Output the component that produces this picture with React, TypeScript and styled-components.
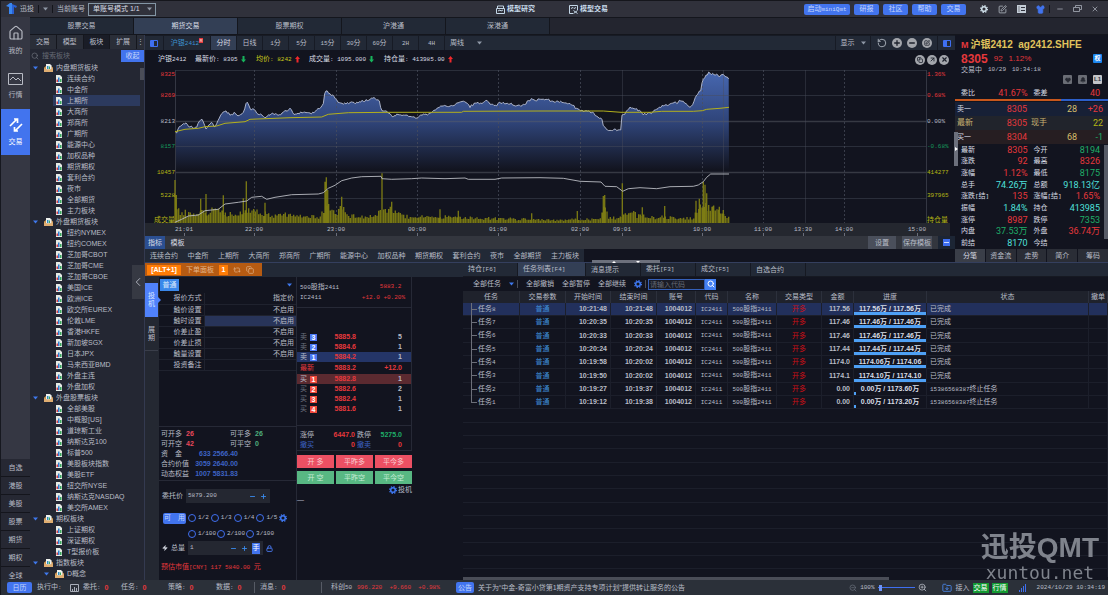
import React from "react";
import styled, { createGlobalStyle, css } from "styled-components";
import {
  Bell, ChevronLeft, Copy, FolderDown, Heart, House, Lock, Minus, Repeat2, Search,
  Shirt, SquarePen, X, Zap, ZoomIn, ZoomOut, RotateCcw, Plus, ArrowUpRight,
} from "lucide-react";

const c = {
  text: "#b9bdc7",
  bright: "#d9dde5",
  dim: "#6d727e",
  bg: "#12141f",
  tab: "#222936",
  tabOn: "#333f55",
  line: "#262936",
  blue: "#4274ee",
  red: "#e5383c",
  green: "#1fae68",
  yellow: "#b5b414",
  cyan: "#4fe0dc",
};

const sans = `"Liberation Sans", "Noto Sans CJK SC", sans-serif`;
const mono = `"Liberation Mono", "Noto Sans CJK SC", monospace`;

const Global = createGlobalStyle`
  *, *::before, *::after { box-sizing: border-box; }
  html, body { margin: 0; background: ${c.bg}; }
  body { font: 7px/10px ${sans}; color: ${c.text}; overflow: hidden; }
  button, input, select { font: inherit; color: inherit; margin: 0; padding: 0; border: 0; background: none; outline: 0; }
  button { white-space: nowrap; cursor: pointer; }
  svg { display: block; flex: none; }
`;

const Mono = styled.span<{ $c?: string }>`
  font: 6px/10px ${mono};
  color: ${(p) => p.$c || "inherit"};
  white-space: pre;
`;

/* Latin runs are set in the fixed-width face, Chinese runs in the body face. */
const mix = (s: string) => (
  <span>
    {s.split(/([\u3000-\u9fff]+)/).map((part, i) =>
      part === "" ? null : i % 2 ? part : <Mono key={i}>{part}</Mono>
    )}
  </span>
);

const Window = styled.div`
  display: flex;
  flex-direction: column;
  height: 100vh;
  white-space: nowrap;
  border-left: 1px solid #16181f;
`;

/* ---------- title bar ---------- */
const TitleBar = styled.header`
  flex: none;
  height: 17px;
  display: grid;
  grid-template-columns: 1fr auto 1fr;
  align-items: center;
  background: #30313b;
  border-top: 1px solid #15161c;
`;
const Group = styled.div<{ $gap?: number; $end?: boolean; $push?: boolean; $pad?: string }>`
  display: flex;
  align-items: center;
  gap: ${(p) => p.$gap ?? 4}px;
  justify-content: ${(p) => (p.$end ? "flex-end" : "flex-start")};
  margin-left: ${(p) => (p.$push ? "auto" : 0)};
  padding: ${(p) => p.$pad || 0};
`;
const Bar = styled.i<{ $h?: number; $c?: string }>`
  width: 1px;
  height: ${(p) => p.$h || 8}px;
  background: ${(p) => p.$c || "#14151b"};
`;
const AccountSelect = styled.select`
  appearance: none;
  width: 68px;
  height: 13px;
  border: 1px solid #8396a5;
  padding: 0 4px;
  color: ${c.bright};
`;
const SelectBox = styled.label`
  display: flex;
  align-items: center;
  gap: 3px;
  svg { margin-left: -12px; }
`;
const ModeButton = styled.button`
  display: flex;
  align-items: center;
  gap: 2px;
  font-weight: 700;
  color: #c9dcec;
`;
const BlueButton = styled.button<{ $w?: number; $flat?: boolean }>`
  min-width: ${(p) => p.$w || 25}px;
  height: 11px;
  padding: 0 ${(p) => (p.$flat ? 0 : 3)}px;
  border-radius: 2px;
  background: ${c.blue};
  color: #c6d7fb;
`;
const IconButton = styled.button<{ $c?: string }>`
  display: flex;
  align-items: center;
  color: ${(p) => p.$c || "#b9c0ca"};
`;

const Caret = ({ color = "#8f98a6", w = 5 }: { color?: string; w?: number }) => (
  <svg width={w} height={4} viewBox="0 0 5 4"><path d="M0 .5h5L2.5 3.5z" fill={color} /></svg>
);
const Gear = ({ color = "#3f78f2" }: { color?: string }) => (
  <svg width="8" height="8" viewBox="0 0 16 16" fill="none" stroke={color}>
    <circle cx="8" cy="8" r="4.600" strokeWidth="3" />
    <circle cx="8" cy="8" r="6.800" strokeWidth="2.400" strokeDasharray="2.670 2.670" />
  </svg>
);
const Logo = () => (
  <svg width="11" height="12" viewBox="0 0 11 12">
    <path d="M0 3l4-3h2v11H3V4z" fill="#3a86f0" /><path d="M6 1l5 2-1 2-2-1v7H6z" fill="#2a5fd0" />
  </svg>
);

/* ---------- frame ---------- */
const Body = styled.div`
  flex: 1;
  min-height: 0;
  display: flex;
`;
const Rail = styled.nav`
  flex: none;
  width: 29px;
  display: flex;
  flex-direction: column;
  background: #353743;
  overflow: hidden;
`;
const RailButton = styled.button<{ $on?: boolean }>`
  flex: none;
  height: 46px;
  display: flex;
  flex-direction: column;
  align-items: center;
  justify-content: center;
  gap: 5px;
  background: ${(p) => (p.$on ? c.blue : "none")};
  color: ${(p) => (p.$on ? "#fff" : "#b8bbc4")};
`;
const RailBottom = styled.div`
  margin-top: auto;
  height: 121px;
  overflow: hidden;
  background: #262833;
`;
const RailItem = styled.button`
  display: block;
  width: 100%;
  height: 18px;
  border-bottom: 1px solid #14151c;
`;
const Right = styled.div`
  flex: 1;
  min-width: 0;
  display: flex;
  flex-direction: column;
`;
const MarketTabs = styled.nav`
  flex: none;
  display: flex;
  height: 18px;
  padding: 1px 0;
  gap: 1px;
  background: #14161d;
  &::after { content: ""; flex: 1; background: #23252f; }
`;
const MarketTab = styled.button<{ $on?: boolean }>`
  width: 103px;
  background: ${(p) => (p.$on ? c.tabOn : c.tab)};
  color: ${(p) => (p.$on ? c.bright : c.text)};
`;
const Columns = styled.div`
  flex: 1;
  min-height: 0;
  display: flex;
`;

/* ---------- tree ---------- */
const TreePanel = styled.aside`
  flex: none;
  width: 115px;
  position: relative;
  display: flex;
  flex-direction: column;
  background: #242733;
  border-right: 1px solid #343a50;
`;
const TreeTabs = styled.div`
  flex: none;
  height: 14px;
  display: flex;
  gap: 1px;
  background: #15171e;
`;
const TreeTab = styled.button<{ $on?: boolean }>`
  width: 26px;
  background: ${(p) => (p.$on ? "#1a1d27" : "#2a2e38")};
  &:last-child { flex: 1; }
`;
const SearchRow = styled.label`
  flex: none;
  height: 13px;
  display: flex;
  align-items: center;
  gap: 3px;
  padding-left: 1px;
  color: #70747f;
  input { flex: 1; min-width: 0; }
  input::placeholder { color: #666a75; opacity: 1; }
  button { width: 23px; height: 12px; background: ${c.blue}; color: #c6d6fb; }
`;
const TreeList = styled.ul`
  flex: 1;
  min-height: 0;
  margin: 0;
  padding: 0;
  list-style: none;
  overflow: hidden;
`;
const TreeRow = styled.li<{ $leaf?: boolean; $sub?: boolean; $on?: boolean }>`
  height: 11px;
  display: flex;
  align-items: center;
  gap: ${(p) => (p.$leaf ? 5 : 3)}px;
  margin: ${(p) => (p.$leaf ? "0 4px 0 23px" : "0")};
  padding-left: ${(p) => (p.$leaf ? 3 : p.$sub ? 14 : 3)}px;
  background: ${(p) => (p.$on ? "#2c3a5e" : "none")};
  svg + svg { margin-left: 3px; }
`;
const Thumb = styled.i`
  position: absolute;
  right: 0;
  top: 33px;
  width: 4px;
  height: 12px;
  background: #4a4d58;
`;
const Collapse = styled.button`
  position: absolute;
  z-index: 1;
  right: 0;
  top: 230px;
  width: 12px;
  height: 34px;
  display: flex;
  align-items: center;
  justify-content: center;
  background: #363943;
`;

const DocIcon = () => (
  <svg width="6" height="8" viewBox="0 0 12 16">
    <path d="M0 0h8l4 4v12H0z" fill="#e6ebe6" />
    <path d="M1 9h3v5H1z" fill="#d33b48" /><path d="M4 5h3v9H4z" fill="#2e7fd0" /><path d="M8 8h3v6H8z" fill="#39a85c" />
  </svg>
);
const FolderIcon = () => (
  <svg width="9" height="8" viewBox="0 0 18 16">
    <path d="M0 7l4-3h10l4 3v9H0z" fill="#c98f4a" />
    <path d="M4 0h8l3 3v8H4z" fill="#eef1ee" /><path d="M6 4h3v6H6z" fill="#2e8fc0" /><path d="M10 5h2v5h-2z" fill="#39a85c" />
    <path d="M0 8l6 4h6l6-4v8H0z" fill="#e0ae72" />
  </svg>
);

type Node = { name: string; kids?: string[] };
const tree: Node[] = [
  { name: "内盘期货板块", kids: ["连续合约", "中金所", "上期所", "大商所", "郑商所", "广期所", "能源中心", "加权品种", "期货期权", "套利合约", "夜市", "全部期货", "主力板块"] },
  { name: "外盘期货板块", kids: ["纽约NYMEX", "纽约COMEX", "芝加哥CBOT", "芝加哥CME", "芝加哥CBOE", "美国ICE", "欧洲ICE", "欧交所EUREX", "伦敦LME", "香港HKFE", "新加坡SGX", "日本JPX", "马来西亚BMD", "外盘主连", "外盘加权"] },
  { name: "外盘股票板块", kids: ["全部美股", "中概股[US]", "道琼斯工业", "纳斯达克100", "标普500", "美股板块指数", "美股ETF", "纽交所NYSE", "纳斯达克NASDAQ", "美交所AMEX"] },
  { name: "期权板块", kids: ["上证期权", "深证期权", "T型报价板"] },
  { name: "指数板块" },
];

/* ---------- main column ---------- */
const Main = styled.main`
  flex: 1;
  min-width: 0;
  display: flex;
  flex-direction: column;
`;
const Upper = styled.section`
  flex: none;
  position: relative;
  display: flex;
  border-bottom: 1px solid #343f5e;
`;
const ChartCol = styled.div`
  flex: 1;
  min-width: 0;
`;
const ChartBar = styled.div`
  height: 15px;
  display: flex;
  gap: 1px;
  padding-top: 1px;
  background: #171b25;
`;
const ChartBtn = styled.button<{ $w?: number; $on?: boolean; $grow?: boolean }>`
  width: ${(p) => p.$w || 25}px;
  flex: ${(p) => (p.$grow ? "1" : "none")};
  display: flex;
  align-items: center;
  justify-content: ${(p) => (p.$grow ? "flex-start" : "center")};
  padding-left: ${(p) => (p.$grow ? 5 : 0)}px;
  gap: ${(p) => (p.$grow ? 13 : 6)}px;
  background: ${(p) => (p.$on ? c.tabOn : c.tab)};
  color: ${(p) => (p.$on ? c.bright : c.text)};
`;
const SymbolButton = styled(ChartBtn)`
  gap: 0;
  color: #3d92cf;
  sup { width: 4px; height: 5px; margin-bottom: 6px; background: ${c.red}; color: #fff; font-size: 4px; line-height: 5px; }
`;
const Tools = styled.div`
  display: flex;
  align-items: center;
  gap: 5px;
  width: 66px;
  padding-left: 6px;
  background: ${c.tab};
`;
const Round = styled.button`
  width: 10px;
  height: 10px;
  border-radius: 50%;
  background: #a3a6ac;
  color: #1e222d;
  display: flex;
  align-items: center;
  justify-content: center;
`;
const Legend = styled.div`
  height: 16px;
  display: flex;
  align-items: center;
  padding: 3px 6px 0 13px;
  color: ${c.bright};
`;
const LegendItem = styled.span<{ $w: number; $c?: string }>`
  display: flex;
  align-items: center;
  gap: 3px;
  width: ${(p) => p.$w}px;
  color: ${(p) => p.$c || "inherit"};
`;
const Arrow = ({ up }: { up?: boolean }) => (
  <svg width="5" height="7" viewBox="0 0 5 7">
    {up ? <path d="M0 3L2.500 0L5 3H3.500V6.500H1.500V3z" fill="#f0282c" /> : <path d="M0 3.500H1.500V0H3.500V3.500H5L2.500 6.500z" fill="#17b35c" />}
  </svg>
);

/* Chart series: x counts thirds of a pixel from the chart's left edge, y likewise from the top. */
type P = [number, number];
const shift = (a: P[]): P[] => a.map(([x, y]) => [x + 1185, y]);
const price: P[] = [
  [90,215],[93,222],[100,205],[110,195],[120,188],[130,198],[140,200],[152,205],[165,180],[172,176],[182,206],[192,196],[200,186],[210,203],[216,190],[225,168],[235,155],[245,155],[258,165],[268,158],[280,170],[295,158],[305,124],[312,136],[318,148],[326,146],[338,160],[350,165],[362,176],[372,164],[384,160],[396,165],[410,162],[420,150],[430,152],[438,145],[446,162],[460,162],[475,155],[490,160],[505,158],[515,150],[525,145],[535,128],[538,105],[545,92],[552,98],[560,105],[570,112],[582,130],[600,130],[615,128],[630,130],[645,125],[660,122],[672,118],[684,112],[695,118],[703,124],[710,155],[722,150],[732,160],[740,170],[755,165],[770,165],[785,165],[800,170],[818,173],[830,165],[845,163],[860,157],[875,148],[890,138],[905,140],[920,138],[935,130],[950,123],[962,128],[975,140],[990,130],[1005,130],[1015,128],[1025,122],[1035,132],[1050,138],[1065,128],[1080,130],[1095,130],[1110,135],[1125,138],[1140,132],[1150,122],[1160,118],[1175,120],
  ...shift([[0,115],[20,118],[40,125],[60,125],[75,130],[95,133],[110,146],[125,152],[145,155],[162,160],[175,173],[186,178],[188,195],[200,208],[215,211],[230,209],[243,211],[245,165],[255,160],[262,150],[270,140],[280,145],[290,148],[300,155],[310,163],[325,160],[335,162],[345,150],[360,142],[375,135],[385,133],[400,126],[410,128],[422,121],[435,128],[450,142],[460,130],[468,110],[475,98],[482,93],[488,58],[497,48],[507,38],[517,42],[527,42],[537,50],[547,40],[557,48],[564,55],[567,60]]),
];
const average: P[] = [
  [90,215],[120,208],[160,205],[180,200],[215,198],[240,190],[300,185],[315,178],[360,176],[435,173],[530,171],[550,163],[610,158],[735,157],[950,157],[955,154],
  ...shift([[0,153],[190,153],[243,157],[330,157],[365,154],[460,154],[487,152],[500,148],[540,145],[567,142]]),
];
const interest: P[] = [
  [90,487],[110,478],[130,468],[160,465],[180,452],[220,448],[240,432],[280,427],[305,423],[320,412],[350,409],[365,418],[390,412],[440,404],[520,402],[535,398],[550,385],[570,376],[590,362],[620,354],[650,350],[708,349],[711,356],[740,358],[800,356],[830,354],[900,356],[960,354],[970,358],[1050,358],[1070,354],
  ...shift([[0,353],[70,355],[120,364],[183,366],[195,379],[230,380],[248,394],[265,386],[300,383],[350,386],[390,380],[460,379],[475,375],[490,365],[500,352],[512,342],[567,342]]),
];
const volumeBase: P[] = [
  [92,90],[100,50],[140,30],[200,45],[230,45],[260,30],[310,45],[350,40],[380,25],[420,30],[520,22],[535,60],[560,70],[575,40],[590,60],[605,30],[640,22],[680,25],[710,40],[730,50],[750,45],[790,22],[850,25],[950,20],[1050,18],
  ...shift([[0,12],[60,10],[110,15],[180,15],[190,60],[200,50],[205,20],[240,20],[252,40],[275,38],[300,25],[400,20],[460,20],[466,50],[490,80],[510,60],[540,35],[567,20]]),
];
const volumeSpikes: P[] = [
  [90,360],[94,405],[167,416],[183,402],[235,406],[295,415],[304,364],[360,428],[540,365],[544,352],[548,390],[590,410],[711,340],[740,425],[885,448],[940,452],[1160,460],
  ...shift([[112,453],[190,408],[194,405],[247,370],[307,442],[374,438],[468,422],[478,416],[490,365],[495,374],[500,400],[520,438],[538,440],[550,450]]),
];
const noise = (n: number) => { const v = Math.sin(n * 12.9898) * 43758.5453; return v - Math.floor(v); };
const at = (s: P[], x: number) => {
  const i = Math.max(1, s.findIndex((p) => p[0] >= x));
  const [a, b] = [s[i - 1], s[i]];
  return a[1] + ((b[1] - a[1]) * (x - a[0])) / (b[0] - a[0] || 1);
};
const toPath = (s: P[]) => s.map(([x, y], i) => `${i ? "L" : "M"}${(x / 3).toFixed(1)} ${(y / 3).toFixed(1)}`).join("");
const jagged: P[] = [];
for (let x = 91; x <= 1751; x += 4) jagged.push([x, at(price, x) + (noise(x) - 0.5) * 6]);
const pricePath = toPath(jagged);
const bars: P[] = [];
for (let x = 96; x <= 1752; x += 5) bars.push([x, at(volumeBase, x) * (0.5 + noise(x + 7) * 0.55)]);
const volPath = [...bars, ...volumeSpikes.map(([x, y]): P => [x, 489 - y])]
  .map(([x, h]) => `M${(x / 3).toFixed(1)} 163V${(163 - h / 3).toFixed(1)}`).join("");

const dashedAt = [109, 191, 272, 353, 435, 557, 618, 699];
const solidAt = [477, 578, 660];
const times: [string, number][] = [["21:01", 39], ["22:00", 109], ["23:00", 191], ["00:00", 272], ["01:00", 353], ["02:00", 435], ["09:01", 477], ["10:00", 557], ["11:00", 618], ["13:30", 658], ["14:00", 699], ["15:00", 772]];
const scale: [string, string, string, number][] = [
  ["8325", "1.36%", c.red, 16], ["8269", "0.68%", c.red, 37], ["8213", "0.00%", c.text, 63],
  ["8157", "-0.68%", "#159a5e", 88], ["10457", "414277", c.yellow, 114], ["5228", "397965", c.yellow, 137], ["成交量", "持仓量", c.yellow, 162],
];

const ChartSvg = styled.svg`
  width: 100%;
  height: auto;
  background: ${c.bg};
  text { font: 6px ${mono}; }
  .unit { font-size: 7px; }
`;
const Chart = () => (
  <ChartSvg viewBox="0 6 810 170" role="img" aria-label="沪银2412 分时">
    <defs>
      <linearGradient id="area" x1="0" y1="12" x2="0" y2="112" gradientUnits="userSpaceOnUse">
        <stop offset="0" stopColor="#4767b0" /><stop offset=".5" stopColor="#2f4479" /><stop offset=".98" stopColor="#12141f" />
      </linearGradient>
    </defs>
    <path d={`${pricePath}L584 112H30z`} fill="url(#area)" />
    <rect y="163" width="805" height="13" fill="#24272f" />
    <path d="M30 10.500H781M30 35.500H781M30 86.500H781M30 138.500H781" stroke="#4a4e5c" strokeOpacity=".45" />
    <path d="M30 61.500H781M30 112.500H781" stroke="#5a5e68" strokeOpacity=".5" strokeWidth="1.500" />
    <path d="M30.500 10V163M781.500 10V163" stroke="#343743" />
    {dashedAt.map((x) => <path key={x} d={`M${x + 0.5} 10V163`} stroke="#4a4e5c" strokeOpacity=".7" strokeDasharray="2 2" />)}
    {solidAt.map((x) => <path key={x} d={`M${x + 0.5} 10V163`} stroke="#4a4e5c" strokeOpacity=".4" />)}
    <path d={volPath} stroke="#7d7c14" strokeWidth="1.300" />
    <path d={pricePath} fill="none" stroke="#b9c0d4" strokeWidth=".9" />
    <path d={toPath(average)} fill="none" stroke="#b3b01c" strokeWidth="1" />
    <path d={toPath(interest)} fill="none" stroke="#b9bbc2" strokeWidth=".9" />
    {scale.map(([l, r, color, y]) => (
      <g key={l} fill={color}>
        <text x="30" y={y} textAnchor="end" className={l === "成交量" ? "unit" : undefined}>{l}</text>
        <text x="782" y={y} className={l === "成交量" ? "unit" : undefined}>{r}</text>
      </g>
    ))}
    {times.map(([t, x]) => (
      <g key={t} fill={c.text}>
        <path d={`M${x + 0.5} 173v3`} stroke="#6a6e7a" />
        <text x={x} y="171" textAnchor="middle">{t}</text>
      </g>
    ))}
  </ChartSvg>
);

const IndicatorRow = styled.div`
  height: 13px;
  display: flex;
  align-items: stretch;
  background: #33363e;
`;
const IndicatorTab = styled.button<{ $on?: boolean }>`
  width: ${(p) => (p.$on ? 20 : 25)}px;
  background: ${(p) => (p.$on ? "#2b4f91" : "none")};
  color: ${c.bright};
`;
const GreyButton = styled.button`
  min-width: 28px;
  margin-right: 6px;
  padding: 0 1px;
  background: #4a4f5b;
`;
const Spacer = styled.i`
  flex: 1;
`;
const Corner = styled.div`
  flex: 0 0 17px;
  display: flex;
  align-items: center;
  justify-content: center;
  background: #1c2534;
`;
const SectorRow = styled.div`
  height: 13px;
  display: flex;
  align-items: center;
  justify-content: space-between;
  width: 439px;
  padding: 0 5px;
  background: ${c.tab};
`;
const Splitter = styled.i<{ $v?: boolean }>`
  position: absolute;
  z-index: 1;
  background: #6c707c;
  display: flex;
  align-items: center;
  justify-content: space-evenly;
  ${(p) => p.$v
    ? css`right: 150px; top: 97px; width: 4px; height: 34px;`
    : css`left: 447px; bottom: -1px; width: 68px; height: 3px;`}
`;

/* ---------- quote ---------- */
const Quote = styled.aside`
  flex: none;
  width: 153px;
  display: flex;
  flex-direction: column;
  background: ${c.bg};
`;
const QuoteHead = styled.div`
  height: 51px;
  padding: 3px 6px 0;
`;
const HeadLine = styled.div<{ $h: number; $gap?: number; $end?: boolean }>`
  display: flex;
  align-items: center;
  justify-content: ${(p) => (p.$end ? "flex-end" : "flex-start")};
  gap: ${(p) => p.$gap ?? 6}px;
  height: ${(p) => p.$h}px;
`;
const Num = styled.b<{ $s?: number; $c?: string; $w?: number }>`
  font-size: ${(p) => p.$s || 7}px;
  font-weight: ${(p) => p.$w || 700};
  color: ${(p) => p.$c || "inherit"};
`;
const Badge = styled.span<{ $bg: string; $c?: string; $push?: boolean }>`
  display: flex;
  align-items: center;
  justify-content: center;
  width: 9px;
  height: 9px;
  border-radius: 1px;
  background: ${(p) => p.$bg};
  color: ${(p) => p.$c || "#fff"};
  font: 700 6px/9px ${sans};
  margin-left: ${(p) => (p.$push ? "auto" : 0)};
`;
const Split = styled.div`
  height: 2px;
  margin: 0 0 1px;
  background: linear-gradient(90deg, #c8571c 69%, #2c5fc9 69%);
`;
const QuotePair = styled.div<{ $single?: boolean }>`
  display: grid;
  grid-template-columns: 1fr 1fr;
  gap: 0 6px;
  flex: ${(p) => (p.$single ? "0 0 13px" : "1")};
  padding: 0 8px 0 6px;
  grid-auto-rows: 1fr;
  color: ${c.bright};
`;
const Pair = styled.div<{ $c?: string }>`
  display: flex;
  align-items: center;
  justify-content: space-between;
  b { font: 9px/10px Roboto, "Noto Sans CJK SC", sans-serif; color: ${(p) => p.$c}; }
`;
const DepthRow = styled.div<{ $bg: string }>`
  flex: none;
  height: 14px;
  display: grid;
  grid-template-columns: 70px 50px 1fr;
  align-items: center;
  padding: 0 5px 0 2px;
  background: ${(p) => p.$bg};
  font: 9px/10px Roboto, "Noto Sans CJK SC", sans-serif;
  > * { display: flex; justify-content: space-between; }
  > :nth-child(n + 2) { justify-content: flex-end; }
`;
const DepthLabel = styled.span<{ $big?: boolean; $inset?: boolean }>`
  font-size: ${(p) => (p.$big ? 8 : 7)}px;
  color: ${(p) => (p.$big ? "#c9b273" : c.bright)};
  padding-right: ${(p) => (p.$inset ? 30 : 0)}px;
`;
const QuoteTabs = styled.div`
  flex: none;
  height: 13px;
  display: grid;
  grid-template-columns: repeat(5, 1fr);
  gap: 1px;
  button { background: #2a2d36; overflow: hidden; }
  button:first-child { background: #3a3e48; color: ${c.bright}; }
`;
const ScrollArea = styled.div`
  flex: 1;
  display: flex;
  position: relative;
  &::after { content: ""; position: absolute; right: 0; top: 1px; bottom: 10px; width: 4px; background: #575b66; }
`;
const quotes: [string, string, string, string, string, string][] = [
  ["最新", "8305", c.red, "今开", "8194", c.green],
  ["涨跌", "92", c.red, "最高", "8326", c.red],
  ["涨幅", "1.12%", c.red, "最低", "8175", c.green],
  ["总手", "74.26万", c.cyan, "总额", "918.13亿", c.cyan],
  ["涨跌[结]", "135", c.red, "涨幅[结]", "1.65%", c.red],
  ["振幅", "1.84%", c.cyan, "持仓", "413985", c.cyan],
  ["涨停", "8987", c.red, "跌停", "7353", c.green],
  ["内盘", "37.53万", c.green, "外盘", "36.74万", c.red],
  ["前结", "8170", c.cyan, "今结", "", c.cyan],
];

/* ---------- lower ---------- */
const Lower = styled.section`
  flex: 1;
  min-height: 0;
  display: flex;
`;
const Order = styled.div`
  flex: none;
  width: 318px;
  display: flex;
  flex-direction: column;
`;
const OrderHead = styled.div`
  flex: none;
  height: 14px;
  background: ${c.tab};
`;
const AltTag = styled.div`
  display: flex;
  align-items: center;
  gap: 5px;
  width: 117px;
  height: 13px;
  padding-left: 2px;
  background: #b65b12;
  color: #e3b58d;
`;
const Hot = styled.b<{ $w: number }>`
  width: ${(p) => p.$w}px;
  height: 10px;
  background: #ff7c06;
  color: #fff;
  text-align: center;
`;
const OrderBody = styled.div`
  flex: 1;
  min-height: 0;
  display: flex;
`;
const SideTabs = styled.div`
  width: 14px;
  padding-top: 6px;
  background: #242832;
`;
const SideTab = styled.button<{ $on?: boolean }>`
  position: relative;
  display: block;
  width: 13px;
  height: 34px;
  white-space: normal;
  line-height: 8px;
  padding: 0 3px;
  background: ${(p) => (p.$on ? "#5082fb" : "none")};
  color: ${(p) => (p.$on ? "#dbe5ff" : c.text)};
  border-bottom: ${(p) => (p.$on ? "0" : "1px solid #3a3e4a")};
  &::after {
    content: ""; position: absolute; left: 13px; top: 14px;
    border: 3px solid transparent; border-right-width: 0;
    border-left-color: ${(p) => (p.$on ? "#5082fb" : "transparent")};
  }
`;
const Form = styled.form`
  width: 138px;
  display: flex;
  flex-direction: column;
  border-right: 1px solid ${c.line};
`;
const FormTop = styled.div`
  display: flex;
  align-items: center;
  justify-content: space-between;
  height: 16px;
  padding: 0 4px 0 1px;
  button { width: 19px; height: 12px; background: #3a87ea; color: #d7e7fc; }
`;
const Params = styled.table`
  width: 100%;
  border-collapse: collapse;
  table-layout: fixed;
  th, td { height: 11px; padding: 0 2px; font-weight: 400; text-align: right; border-bottom: 1px solid #1f222e; line-height: 10px; }
  th { width: 45px; border-right: 1px solid #1f222e; }
`;
const ParamValue = styled.td<{ $on?: boolean }>`
  background: ${(p) => (p.$on ? "#283459" : "none")};
`;
const Funds = styled.div`
  margin-top: auto;
  display: grid;
  grid-template-columns: 25px 44px 25px 1fr;
  padding: 2px 0 1px 2px;
  border-top: 1px solid ${c.line};
  border-bottom: 1px solid ${c.line};
`;
const Fund = styled.div`
  grid-column: 1 / 4;
  display: flex;
  justify-content: space-between;
  width: 77px;
`;
const Entry = styled.div`
  height: 99px;
  display: flex;
  flex-direction: column;
  padding: 8px 0 0 2px;
`;
const Line = styled.div<{ $h: number; $gap?: number; $in?: number }>`
  height: ${(p) => p.$h}px;
  display: flex;
  align-items: center;
  gap: ${(p) => p.$gap ?? 3}px;
  padding-left: ${(p) => p.$in || 0}px;
`;
const Stepper = styled.span<{ $w: number }>`
  display: flex;
  align-items: center;
  width: ${(p) => p.$w}px;
  height: 14px;
  gap: 4px;
  padding: 0 3px 0 2px;
  background: #242731;
  input { flex: 1; min-width: 0; font: 6px/10px ${mono}; }
  > button { color: #3a8cf0; }
`;
const UnitButton = styled.button`
  && { width: 8px; height: 11px; background: ${c.blue}; color: #fff; }
`;
const Choice = styled.label`
  display: flex;
  align-items: center;
  gap: 2px;
  input { appearance: none; width: 8px; height: 8px; border: 1px solid #3f6ff0; border-radius: 50%; }
`;
const Ladder = styled.div`
  width: 115px;
  display: flex;
  flex-direction: column;
`;
const LadderBox = styled.div<{ $grow?: boolean; $pad?: string }>`
  display: flex;
  flex-direction: column;
  flex: ${(p) => (p.$grow ? "1" : "none")};
  padding: ${(p) => p.$pad || 0};
  border-right: 1px solid ${c.line};
  border-bottom: 1px solid ${c.line};
`;
const LadderRow = styled.div<{ $bg?: string; $h?: number; $c?: string }>`
  display: grid;
  grid-template-columns: 10px 13px 33px 1fr;
  align-items: center;
  height: ${(p) => p.$h || 10}px;
  padding: 0 9px 0 3px;
  background: ${(p) => p.$bg || "none"};
  color: ${(p) => p.$c || c.text};
  > :last-child { text-align: right; }
  > :nth-child(3) { text-align: right; }
`;
const Side = styled.span<{ $dim: boolean }>`
  color: ${(p) => (p.$dim ? c.dim : "inherit")};
`;
const Level = styled.b<{ $bg: string }>`
  width: 7px;
  height: 7px;
  background: ${(p) => p.$bg};
  color: #fff;
  line-height: 7px;
  text-align: center;
`;
const Instrument = styled.div`
  display: flex;
  justify-content: space-between;
  padding: 0 6px 0 3px;
`;
const Limits = styled.div`
  display: grid;
  grid-template-columns: 24px 33px 22px 1fr;
  padding: 4px 7px 0 3px;
  b { text-align: right; padding-right: 2px; }
`;
const Cancel = styled.span`
  color: #3d63c4;
`;
const TradeGrid = styled.div`
  display: grid;
  grid-template-columns: repeat(3, 1fr);
  gap: 3px 2px;
  padding-top: 4px;
`;
const TradeButton = styled.button<{ $sell?: boolean }>`
  height: 13px;
  background: ${(p) => (p.$sell ? "#58b883" : "#ec5063")};
  color: ${(p) => (p.$sell ? "#c6ecd6" : "#f9cdd2")};
`;
const LadderFoot = styled.div`
  height: 96px;
  padding-top: 1px;
`;

/* ---------- tasks ---------- */
const Tasks = styled.div`
  flex: 1;
  min-width: 0;
  display: flex;
  flex-direction: column;
`;
const TaskTabs = styled.div`
  flex: none;
  height: 14px;
  display: flex;
  gap: 1px;
  padding-bottom: 1px;
  background: #161922;
  &::after { content: ""; flex: 1; background: ${c.tab}; }
`;
const TaskTab = styled.button<{ $on?: boolean }>`
  width: ${(p) => (p.$on ? 67 : 54)}px;
  padding-left: 5px;
  text-align: left;
  background: ${(p) => (p.$on ? c.tabOn : c.tab)};
`;
const TaskTools = styled.div`
  flex: none;
  height: 14px;
  display: flex;
  align-items: center;
  gap: 8px;
  padding-left: 10px;
`;
const Separated = styled.span`
  display: flex;
  align-items: center;
  gap: 3px;
`;
const CodeSearch = styled.label`
  display: flex;
  margin-left: -6px;
  input { width: 57px; height: 11px; padding: 0 1px; border: 1px solid #3560b8; background: #1a1c26; }
  input::placeholder { color: #666a75; opacity: 1; }
  button { width: 11px; height: 11px; display: flex; align-items: center; justify-content: center; background: #4380f3; color: #fff; }
`;
const TableWrap = styled.div`
  flex: 1;
  min-height: 0;
  overflow: hidden;
`;
const Table = styled.table`
  width: 100%;
  table-layout: fixed;
  border-spacing: 0;
  th { height: 12px; padding: 0; font-weight: 400; background: #1f222c; border-right: 1px solid #2c303c; overflow: hidden; }
  td { height: 13px; padding: 0 3px; line-height: 10px; border-bottom: 1px solid #1c1f2b; border-right: 1px solid #1c1f2b; text-align: center; position: relative; }
  tbody tr:nth-child(3n) td { height: 14px; }
`;
const TaskRow = styled.tr<{ $on?: boolean }>`
  background: ${(p) => (p.$on ? "#22305c" : "none")};
  td:nth-child(3), td:nth-child(4), td:nth-child(5), td:nth-child(9) { text-align: right; font-weight: 700; }
  td:nth-child(2) { color: #3f8ed8; }
  td:nth-child(8) { color: #cf0f16; }
  td:nth-child(11) { text-align: left; }
`;
const TaskName = styled.td<{ $last?: boolean }>`
  && { text-align: left; padding-left: 15px; }
  &::before { content: ""; position: absolute; left: 8px; top: 0; bottom: ${(p) => (p.$last ? "6px" : "-1px")}; border-left: 1px solid #6c6f79; }
  &::after { content: ""; position: absolute; left: 8px; top: 6px; width: 6px; border-top: 1px solid #6c6f79; }
`;
const Progress = styled.td`
  && { padding: 0; font-weight: 700; color: ${c.bright}; }
  i { position: absolute; left: 0; bottom: 0; height: 3px; background: #4ea0f5; }
`;
const HScroll = styled.div`
  flex: none;
  height: 3px;
  margin-right: 34%;
  background: #4a4d57;
`;
const tasks = [
  ["任务8", "10:21:48", "10:21:48", "117.56", "117.56万 / 117.56万", 1],
  ["任务7", "10:20:35", "10:20:35", "117.46", "117.46万 / 117.46万", 1],
  ["任务6", "10:20:33", "10:20:33", "117.46", "117.46万 / 117.46万", 1],
  ["任务5", "10:20:24", "10:20:24", "117.44", "117.44万 / 117.44万", 1],
  ["任务4", "10:19:58", "10:20:02", "1174.0", "1174.06万 / 1174.06", 1],
  ["任务3", "10:19:50", "10:20:02", "1174.1", "1174.10万 / 1174.10", 1],
  ["任务2", "10:19:27", "10:19:37", "0.00", "0.00万 / 1173.60万", 0],
  ["任务1", "10:19:12", "10:19:38", "0.00", "0.00万 / 1173.20万", 0],
] as const;
const columns: [string, number?][] = [["任务", 57], ["交易参数", 46], ["开始时间", 45], ["结束时间", 46], ["账号", 39], ["代码", 32], ["名称", 49], ["交易类型", 45], ["金额", 32], ["进度", 73], ["状态"], ["撤单", 19]];

/* ---------- status bar ---------- */
const Status = styled.footer`
  flex: none;
  height: 15px;
  display: flex;
  align-items: center;
  padding: 0 3px 0 6px;
  background: #2b3039;
`;
const Cell = styled.span<{ $w?: number }>`
  display: flex;
  align-items: center;
  gap: 4px;
  width: ${(p) => (p.$w ? p.$w + "px" : "auto")};
  flex: none;
`;
const GreenTag = styled.span`
  padding: 0 1px;
  background: #139a32;
  color: #fff;
`;
const ZoomSlider = styled.input`
  appearance: none;
  width: 37px;
  height: 1px;
  background: #3f6ff0;
  &::-webkit-slider-thumb { appearance: none; width: 3px; height: 6px; background: #6d93f7; }
`;
const Watermark = styled.div`
  position: fixed;
  right: 9px;
  bottom: 13px;
  text-align: center;
  font: 700 28px/32px ${sans};
  color: #7f838c;
  pointer-events: none;
  small { display: block; font: 18px/18px "DejaVu Sans Mono", monospace; }
`;

const PanelIcon = () => (
  <svg width="8" height="7" viewBox="0 0 8 7"><path d="M.5.5h7v6h-7z" fill="none" stroke="#3f6ff0" /><path d="M1 1h3v5H1z" fill="#3f6ff0" /></svg>
);

export default function App() {
  return (
    <Window>
      <Global />
      <TitleBar>
        <Group $gap={4} $pad="0 0 0 5px">
          <Group $gap={3}><Logo />迅投</Group>
          <Bar /><Caret /><Bar />
          <SelectBox>当前账号
            <AccountSelect defaultValue="a"><option value="a">单账号模式 1/1</option></AccountSelect><Caret />
          </SelectBox>
        </Group>
        <Group $gap={34} $pad="0 5px 0 0">
          <ModeButton><svg width="9" height="9" viewBox="0 0 9 9" fill="none" stroke="#c3d6e6"><path d="M1.500 3V1h6v2M.5 3.500h8v5h-8zM2 6l2-1 1 1 2-1" /></svg>模型研究</ModeButton>
          <ModeButton><svg width="9" height="9" viewBox="0 0 9 9" fill="none" stroke="#c3d6e6"><path d="M8.500 5V.500H.5v8H4M2 3.500l2-1 1 1L7 2.500M4.500 5.500l4 3M8.500 5.500l-4 3" /></svg>模型交易</ModeButton>
        </Group>
        <Group $end $pad="0 9px 0 0">
          <BlueButton $w={46}>{mix("启动miniQmt")}</BlueButton>
          {["研报", "社区", "帮助", "交易"].map((t) => <BlueButton key={t}>{t}</BlueButton>)}
          <Group $gap={10} $pad="0 0 0 10px">
            <IconButton aria-label="设置"><Gear color="#cfe0ea" /></IconButton>
            <IconButton aria-label="编辑"><SquarePen size={9} /></IconButton>
            <IconButton aria-label="列表">
              <svg width="9" height="8" viewBox="0 0 9 8"><path d="M0 0h9v8H0z" fill="#c3ccd6" /><path d="M1.500 2h1M1.500 4h1M1.500 6h1M4 2.500h4M4 5.500h4" stroke="#30313b" /></svg>
            </IconButton>
            <IconButton aria-label="换肤" $c={c.blue}><Shirt size={9} fill={c.blue} /></IconButton>
          </Group>
          <Bar />
          <Group $gap={9} $pad="0 0 0 2px">
            <IconButton aria-label="最小化"><Minus size={8} /></IconButton>
            <IconButton aria-label="还原">
              <svg width="9" height="8" viewBox="0 0 9 8" fill="none" stroke="currentColor" strokeOpacity=".7"><path d="M.5 2.500h6v4h-6zM2.500 2V.500h6v4H7" /></svg>
            </IconButton>
            <IconButton aria-label="关闭"><X size={8} /></IconButton>
          </Group>
        </Group>
      </TitleBar>

      <Body>
        <Rail>
          <RailButton><House size={16} strokeWidth={1.75} />我的</RailButton>
          <RailButton>
            <svg width="15" height="12" viewBox="0 0 15 12" fill="none" stroke="currentColor"><path d="M.5.500h14v11H.5zM2 7l3-3 3 3 2-2 3 3" /></svg>行情
          </RailButton>
          <RailButton $on>
            <svg width="14" height="14" viewBox="0 0 14 14" fill="none" stroke="currentColor" strokeWidth="1.700"><path d="M1 8l7-7M8.500 5V1H5M13 6l-7 7M5.500 9v4H9" /></svg>交易
          </RailButton>
          <RailBottom>{["自选", "港股", "美股", "股票", "期货", "期权", "全球"].map((t) => <RailItem key={t}>{t}</RailItem>)}</RailBottom>
        </Rail>

        <Right>
          <MarketTabs>
            {["股票交易", "期货交易", "股票期权", "沪港通", "深港通"].map((t, i) => <MarketTab key={t} $on={i === 1}>{t}</MarketTab>)}
          </MarketTabs>
          <Columns>
            <TreePanel>
              <TreeTabs>
                {["交易", "模型", "板块", "扩展", "⋮"].map((t) => <TreeTab key={t} $on={t === "板块"}>{t}</TreeTab>)}
              </TreeTabs>
              <SearchRow><Search size={8} /><input placeholder="搜索板块" /><button>收起</button></SearchRow>
              <TreeList>
                {tree.map((n) => (
                  <React.Fragment key={n.name}>
                    <TreeRow><Caret color="#3f79ee" /><FolderIcon />{n.name}</TreeRow>
                    {n.kids?.map((k) => <TreeRow key={k} $leaf $on={k === "上期所"}><DocIcon />{k}</TreeRow>)}
                  </React.Fragment>
                ))}
                <TreeRow $sub><Caret color="#3f79ee" /><FolderIcon />D概念</TreeRow>
              </TreeList>
              <Thumb />
              <Collapse aria-label="折叠"><ChevronLeft size={14} strokeWidth={1.5} /></Collapse>
            </TreePanel>

            <Main>
              <Upper>
                <ChartCol>
                  <ChartBar>
                    <ChartBtn $w={18} aria-label="面板"><PanelIcon /></ChartBtn>
                    <SymbolButton $w={46}>{mix("沪银2412")}<sup>R</sup></SymbolButton>
                    {["分时", "日线", "1分", "5分", "15分", "30分", "60分", "2H", "4H"].map((t, i) => <ChartBtn key={t} $on={i === 0}>{mix(t)}</ChartBtn>)}
                    <ChartBtn $grow>周线<Caret /></ChartBtn>
                    <ChartBtn $w={34}>显示<Caret /></ChartBtn>
                    <Tools>
                      <IconButton aria-label="撤回"><RotateCcw size={10} /></IconButton>
                      <Round aria-label="放大"><Plus size={8} strokeWidth={4} /></Round>
                      <Round aria-label="缩小"><Minus size={8} strokeWidth={4} /></Round>
                      <Round aria-label="画线"><SquarePen size={6} strokeWidth={3} /></Round>
                    </Tools>
                    <ChartBtn $w={17} aria-label="侧栏"><PanelIcon /></ChartBtn>
                  </ChartBar>
                  <Legend>
                    <LegendItem $w={37}>{mix("沪银2412")}</LegendItem>
                    <LegendItem $w={61}>{mix("最新价: 8305")}<Arrow /></LegendItem>
                    <LegendItem $w={53} $c="#c9c81a">{mix("均价: 8242")}<Arrow up /></LegendItem>
                    <LegendItem $w={75}>{mix("成交量: 1095.000")}<Arrow /></LegendItem>
                    <LegendItem $w={80}>{mix("持仓量: 413985.00")}<Arrow up /></LegendItem>
                    <Group $gap={2} $push>
                      <Round aria-label="缩放"><Copy size={6} strokeWidth={3} /></Round>
                      <Round aria-label="十字"><ArrowUpRight size={7} strokeWidth={3} /></Round>
                      <Round aria-label="关闭"><X size={7} strokeWidth={4} /></Round>
                    </Group>
                  </Legend>
                  <Chart />
                  <IndicatorRow>
                    <IndicatorTab $on>指标</IndicatorTab>
                    <IndicatorTab>模板</IndicatorTab>
                    <Spacer />
                    <GreyButton>设置</GreyButton>
                    <GreyButton>保存模板</GreyButton>
                    <Corner><svg width="7" height="7" viewBox="0 0 7 7"><path d="M0 0h7v7H0z" fill="#3f6ff0" /><path d="M1 3h5v1H1z" fill="#cfdcff" /></svg></Corner>
                  </IndicatorRow>
                  <SectorRow>
                    {["连续合约", "中金所", "上期所", "大商所", "郑商所", "广期所", "能源中心", "加权品种", "期货期权", "套利合约", "夜市", "全部期货", "主力板块"].map((t) => <button key={t}>{t}</button>)}
                  </SectorRow>
                </ChartCol>

                <Quote>
                  <QuoteHead>
                    <HeadLine $h={14} $gap={2}>
                      <Num $s={9} $c={c.red}>M</Num>
                      <Num $s={10} $c="#e0c35c">沪银2412&nbsp; ag2412.SHFE</Num>
                    </HeadLine>
                    <HeadLine $h={13}>
                      <Num $s={12} $c={c.red}>8305</Num>
                      <Num $s={8} $w={400} $c={c.red}>92</Num>
                      <Num $s={8} $w={400} $c={c.red}>1.12%</Num>
                      <Badge $bg="#1b86f0" $push>权</Badge>
                    </HeadLine>
                    <HeadLine $h={10}>交易中<Mono>10/29</Mono><Mono>10:34:18</Mono></HeadLine>
                    <HeadLine $h={9} $end>
                      <Badge $bg="#6a6d75"><Heart size={6} color="#262932" fill="#262932" /></Badge>
                      <Badge $bg="#6a6d75"><Bell size={6} color="#262932" fill="#262932" /></Badge>
                      <Badge $bg="#c3c4c8" $c="#33363f">L1</Badge>
                    </HeadLine>
                  </QuoteHead>
                  <QuotePair $single>
                    <Pair $c={c.red}>委比<b>41.67%</b></Pair>
                    <Pair $c={c.red}>委差<b>40</b></Pair>
                  </QuotePair>
                  <Split />
                  <DepthRow $bg="#172036"><span><DepthLabel>卖一</DepthLabel><Num $s={9} $w={400} $c={c.red}>8305</Num></span><Num $s={9} $w={400} $c="#d6bf6c">28</Num><Num $s={9} $w={400} $c={c.red}>+26</Num></DepthRow>
                  <DepthRow $bg="#21242c"><span><DepthLabel $big>最新</DepthLabel><Num $s={9} $w={400} $c={c.red}>8305</Num></span><span><DepthLabel $big $inset>现手</DepthLabel></span><Num $s={9} $w={400} $c="#b5b414">22</Num></DepthRow>
                  <DepthRow $bg="#261e22"><span><DepthLabel>买一</DepthLabel><Num $s={9} $w={400} $c={c.red}>8304</Num></span><Num $s={9} $w={400} $c="#d6bf6c">68</Num><Num $s={9} $w={400} $c={c.green}>-1</Num></DepthRow>
                  <ScrollArea>
                    <QuotePair>
                      {quotes.map(([a, av, ac, b, bv, bc]) => (
                        <React.Fragment key={a}>
                          <Pair $c={ac}>{mix(a)}<b>{av}</b></Pair>
                          <Pair $c={bc}>{mix(b)}<b>{bv}</b></Pair>
                        </React.Fragment>
                      ))}
                    </QuotePair>
                  </ScrollArea>
                  <QuoteTabs>{["分笔", "资金流", "走势", "简介", "筹码"].map((t) => <button key={t}>{t}</button>)}</QuoteTabs>
                </Quote>
                <Splitter $v><svg width="3" height="4" viewBox="0 0 3 4"><path d="M0 0l3 2-3 2z" fill="#fff" /></svg></Splitter>
                <Splitter><svg width="4" height="2" viewBox="0 0 4 2"><path d="M0 2l2-2 2 2z" fill="#fff" /></svg><svg width="4" height="2" viewBox="0 0 4 2"><path d="M0 0l2 2 2-2z" fill="#fff" /></svg></Splitter>
              </Upper>

              <Lower>
                <Order>
                  <OrderHead>
                    <AltTag><Hot $w={34}>[ALT+1]</Hot>下单面板<Hot $w={9}>1</Hot><Repeat2 size={8} /><Copy size={8} /></AltTag>
                  </OrderHead>
                  <OrderBody>
                    <SideTabs><SideTab $on>投机</SideTab><SideTab>展期</SideTab></SideTabs>
                    <Form onSubmit={(e) => e.preventDefault()}>
                      <FormTop><button type="button">普通</button><Caret color="#3f79ee" /></FormTop>
                      <Params><tbody>
                        {[["报价方式", "指定价"], ["触价设置", "不启用"], ["触时设置", "不启用"], ["价差止盈", "不启用"], ["价差止损", "不启用"], ["触量设置", "不启用"], ["投资备注", ""]].map(([k, v], i) => (
                          <tr key={k}><th scope="row">{k}</th><ParamValue $on={i === 2}>{v}</ParamValue></tr>
                        ))}
                      </tbody></Params>
                      <Funds>
                        <span>可开多</span><Num $c="#e8485a">26</Num><span>可平多</span><Num $c="#4fae7c">26</Num>
                        <span>可开空</span><Num $c="#e8485a">42</Num><span>可平空</span><Num $c="#4fae7c">0</Num>
                        <Fund>资　金<Num $c="#3d63c4">633 2566.40</Num></Fund>
                        <Fund>合约价值<Num $c="#3d63c4">3059 2640.00</Num></Fund>
                        <Fund>动态权益<Num $c="#3d63c4">1007 5831.83</Num></Fund>
                      </Funds>
                      <Entry>
                        <Line $h={14} $in={1}>
                          <label htmlFor="price">委托价</label>
                          <Stepper $w={84}><input id="price" defaultValue="5879.200" /><button type="button" aria-label="减"><Minus size={7} strokeWidth={3} /></button><button type="button" aria-label="加"><Plus size={7} strokeWidth={3} /></button></Stepper>
                        </Line>
                        <Line $h={30} $gap={2} $in={2}>
                          <BlueButton $w={23} $flat type="button">可　用</BlueButton>
                          {["1/2", "1/3", "1/4", "1/5"].map((t) => <Choice key={t}><input type="radio" name="part" /><Mono>{t}</Mono></Choice>)}
                          <Gear />
                        </Line>
                        <Line $h={1} $gap={1} $in={27}>
                          {["1/100", "2/100", "3/100"].map((t) => <Choice key={t}><input type="radio" name="part" /><Mono>{t}</Mono></Choice>)}
                        </Line>
                        <Line $h={28} $gap={3} $in={1}>
                          <Zap size={6} fill="#d6dae2" /><label htmlFor="qty">总量</label>
                          <Stepper $w={75}><input id="qty" defaultValue="1" /><button type="button" aria-label="减"><Minus size={7} strokeWidth={3} /></button><button type="button" aria-label="加"><Plus size={7} strokeWidth={3} /></button><UnitButton type="button">手</UnitButton></Stepper>
                          <Lock size={7} strokeWidth={3} color="#4a7af2" />
                        </Line>
                        <Num $w={400} $c={c.red}>{mix("预估市值[CNY] 117 5840.00 元")}</Num>
                      </Entry>
                    </Form>
                    <Ladder>
                      <LadderBox $pad="5px 0 4px">
                        <Instrument>{mix("500股指2411")}<Mono $c={c.red}>5883.2 </Mono></Instrument>
                        <Instrument><Mono>IC2411</Mono><Mono $c={c.red}>+12.0 +0.20%</Mono></Instrument>
                      </LadderBox>
                      <LadderBox $grow $pad="24px 0 0">
                        {[["3", "5885.8", "5"], ["2", "5884.6", "1"], ["1", "5884.2", "1"]].map(([l, p, q]) => (
                          <LadderRow key={l} $bg={l === "1" ? "#243567" : undefined}><Side $dim={l !== "1"}>卖</Side><Level $bg="#4a78f5">{l}</Level><Num $c={c.red}>{p}</Num><Num>{q}</Num></LadderRow>
                        ))}
                        <LadderRow $h={12} $c={c.red}><span>最新</span><i /><Num>5883.2</Num><Num>+12.0</Num></LadderRow>
                        {[["1", "5882.8", "1"], ["2", "5882.6", "2"], ["3", "5882.4", "1"], ["4", "5881.6", "1"]].map(([l, p, q]) => (
                          <LadderRow key={l} $bg={l === "1" ? "#5b2a30" : undefined}><Side $dim={l !== "1"}>买</Side><Level $bg="#f04a3c">{l}</Level><Num $c={c.red}>{p}</Num><Num>{q}</Num></LadderRow>
                        ))}
                      </LadderBox>
                      <LadderBox>
                        <Limits>
                          <span>涨停</span><Num $c={c.red}>6447.0</Num><span>跌停</span><Num $c={c.green}>5275.0</Num>
                          <Cancel>撤买</Cancel><Num $c={c.red}>0</Num><Cancel>撤卖</Cancel><Num $c={c.red}>0</Num>
                        </Limits>
                      </LadderBox>
                      <TradeGrid>
                        {["开 多", "平昨多", "平今多"].map((t) => <TradeButton key={t}>{t}</TradeButton>)}
                        {["开 空", "平昨空", "平今空"].map((t) => <TradeButton key={t} $sell>{t}</TradeButton>)}
                      </TradeGrid>
                      <LadderFoot>
                        <Group $end $gap={1}><Gear />投机</Group>
                        <span>—</span>
                      </LadderFoot>
                    </Ladder>
                  </OrderBody>
                </Order>

                <Tasks>
                  <TaskTabs>
                    {["持仓[F6]", "任务列表[F4]", "消息提示", "委托[F3]", "成交[F5]", "自选合约"].map((t, i) => <TaskTab key={t} $on={i === 1}>{mix(t)}</TaskTab>)}
                  </TaskTabs>
                  <TaskTools>
                    <button>全部任务</button><Separated><Caret color="#3f79ee" /><Bar $c="#4a4d57" /></Separated>
                    <button>全部撤销</button><button>全部暂停</button><button>全部继续</button>
                    <Separated><Gear /><Bar $c="#4a4d57" /></Separated>
                    <CodeSearch><input placeholder="请输入代码" /><button aria-label="搜索"><Search size={8} strokeWidth={3} /></button></CodeSearch>
                  </TaskTools>
                  <TableWrap>
                    <Table>
                      <colgroup>{columns.map(([n, w]) => <col key={n} width={w} />)}</colgroup>
                      <thead><tr>{columns.map(([n]) => <th key={n} scope="col">{n}</th>)}</tr></thead>
                      <tbody>
                        {tasks.map(([n, s, e, m, p, done], i) => (
                          <TaskRow key={n} $on={i === 0}>
                            <TaskName $last={i === 7}>{mix(n)}</TaskName>
                            <td>普通</td>
                            <td>{s}</td><td>{e}</td><td>1004012</td>
                            <td><Mono>IC2411</Mono></td><td>{mix("500股指2411")}</td>
                            <td>开多</td><td>{m}</td>
                            <Progress>{p}<i style={{ width: done ? "100%" : 2 }} /></Progress>
                            <td>{done ? "已完成" : mix("15386568387终止任务")}</td><td />
                          </TaskRow>
                        ))}
                        {Array.from({ length: 14 }, (_, i) => <tr key={i}><td colSpan={12} /></tr>)}
                      </tbody>
                    </Table>
                  </TableWrap>
                  <HScroll />
                </Tasks>
              </Lower>
            </Main>
          </Columns>
        </Right>
      </Body>

      <Status>
        <Cell $w={30}><BlueButton>日历</BlueButton></Cell>
        <Cell $w={33}>{mix("执行中:")}</Cell>
        <Cell $w={13}><svg width="9" height="8" viewBox="0 0 9 8" fill="none" stroke="#a8adb8"><path d="M.5 7.500v-7h8v7zM2.500 7V5M4.500 7V3M6.500 7V4" /></svg></Cell>
        {([["委托:", 38], ["任务:", 47], ["策略:", 48], ["数据:", 38]] as [string, number][]).map(([t, w]) => <Cell key={t} $w={w}>{mix(t)}<Num $c={c.red}>0</Num></Cell>)}
        <Cell $w={6}><Bar $h={11} $c="#565b65" /></Cell>
        <Cell $w={61}>{mix("消息:")}<Num $c={c.red}>0</Num></Cell>
        <Cell $w={10}><Bar $h={11} $c="#565b65" /></Cell>
        <Cell $w={26}>{mix("科创50")}</Cell>
        <Cell $w={99}><Mono $c={c.red}>996.220  +9.660  +0.98%</Mono></Cell>
        <Cell $w={22}><BlueButton $w={18} $flat>公告</BlueButton></Cell>
        <Cell>关于为“中金-奇富小贷第1期资产支持专项计划”提供转让服务的公告</Cell>
        <Spacer />
        <Group $gap={3}>
          <ZoomOut size={8} color="#6d727e" /><Mono>100%</Mono>
          <ZoomSlider type="range" aria-label="缩放" defaultValue={5} /><ZoomIn size={9} />
          <Group $pad="0 0 0 12px"><FolderDown size={10} color="#4a8af0" />接入</Group>
          <GreenTag>交易</GreenTag><GreenTag>行情</GreenTag>
          <Group $pad="0 7px"><svg width="9" height="8" viewBox="0 0 9 8" stroke="#3f6ff0"><path d="M1.500 8V6M3.500 8V4M5.500 8V2M7.500 8V0" /></svg></Group>
          <Mono>2024/10/29 10:34:19</Mono>
        </Group>
      </Status>
      <Watermark>迅投QMT<small>xuntou.net</small></Watermark>
    </Window>
  );
}
